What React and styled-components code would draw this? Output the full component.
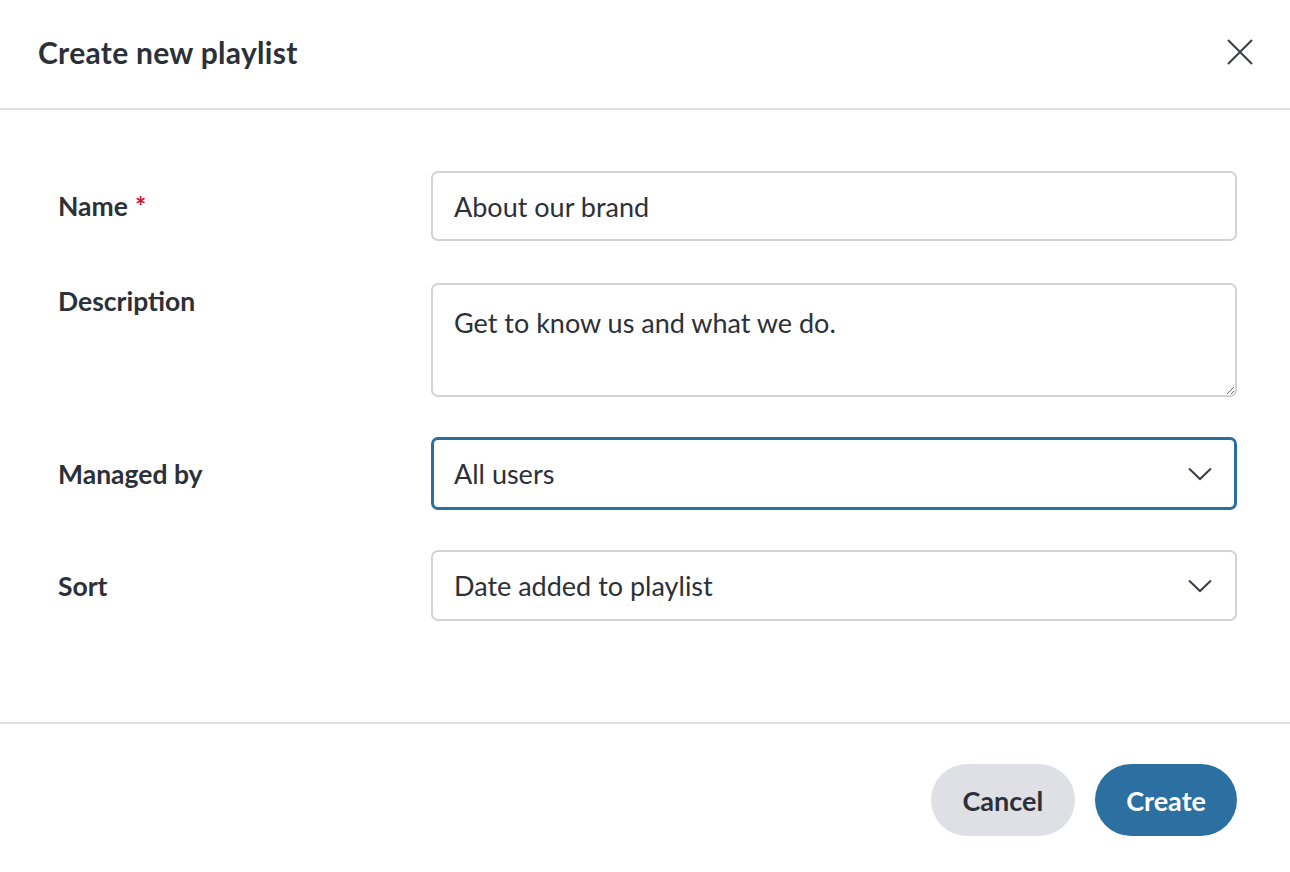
import React from "react";
import styled, { createGlobalStyle } from "styled-components";

const Global = createGlobalStyle`
  html, body { margin: 0; padding: 0; background: #fff; }
  body { font-family: Lato, "Noto Sans", sans-serif; color: #2c3038; }
  * { box-sizing: border-box; }
`;

const Dialog = styled.div`
  width: 1290px;
  height: 872px;
  display: flex;
  flex-direction: column;
  background: #fff;
`;

const Header = styled.header`
  height: 110px;
  display: flex;
  align-items: center;
  justify-content: space-between;
  padding: 0 35px 4px 38px;
  border-bottom: 2px solid #dedee3;
`;

const Title = styled.h1`
  margin: 0;
  font-size: 30px;
  font-weight: 700;
  color: #2c3038;
  letter-spacing: 0.3px;
`;

const CloseButton = styled.button`
  width: 30px;
  height: 30px;
  border: none;
  background: none;
  padding: 0;
  display: flex;
  align-items: center;
  justify-content: center;
  cursor: pointer;
  color: #3a3d44;
`;

const Body = styled.div`
  height: 614px;
  display: flex;
  flex-direction: column;
  gap: 40px;
  padding: 61px 53px 0 58px;
  border-bottom: 2px solid #dedee3;
`;

const Row = styled.div`
  display: grid;
  grid-template-columns: 373px 1fr;
  align-items: ${(p) => (p.$top ? "start" : "center")};
  margin-bottom: ${(p) => p.$extra || 0}px;
`;

const Label = styled.label`
  font-size: 26.5px;
  font-weight: 700;
  color: #2c3038;
  padding-top: ${(p) => (p.$top ? "2px" : "0")};
`;

const Required = styled.span`
  color: #d0103a;
  margin-left: 7px;
`;

const fieldBase = `
  width: 100%;
  font-family: Lato, "Noto Sans", sans-serif;
  font-size: 27px;
  color: #2c3038;
  background: #fff;
  border-radius: 7px;
  outline: none;
`;

const TextInput = styled.input`
  ${fieldBase}
  height: 70px;
  border: 2px solid #d2d2d7;
  padding: 0 21px;
`;

const TextArea = styled.textarea`
  ${fieldBase}
  height: 114px;
  border: 2px solid #d2d2d7;
  padding: 20px 21px;
  resize: vertical;
  display: block;
  line-height: 1.3;
`;

const Select = styled.div`
  ${fieldBase}
  height: ${(p) => (p.$focused ? "73px" : "71px")};
  border: ${(p) => (p.$focused ? "3px solid #2a6f9e" : "2px solid #d2d2d7")};
  padding: ${(p) => (p.$focused ? "0 22px 0 20px" : "0 23px 0 21px")};
  display: flex;
  align-items: center;
  justify-content: space-between;
  cursor: pointer;
`;

const Footer = styled.footer`
  flex: 1;
  display: flex;
  align-items: flex-start;
  justify-content: flex-end;
  gap: 20px;
  padding: 40px 53px 0 0;
`;

const Button = styled.button`
  height: 72px;
  padding: 0 ${(p) => (p.$primary ? "31px" : "32px")};
  border: none;
  border-radius: 36px;
  font-family: Lato, "Noto Sans", sans-serif;
  font-size: 27px;
  font-weight: 700;
  background: ${(p) => (p.$primary ? "#2b70a0" : "#dfe0e5")};
  color: ${(p) => (p.$primary ? "#ffffff" : "#2c3038")};
  cursor: pointer;
`;

const Chevron = () => (
  <svg width="24" height="14" viewBox="0 0 24 14" fill="none">
    <path d="M1 1.5 L12 12 L23 1.5" stroke="#3a3d44" strokeWidth="2" />
  </svg>
);

export default function App() {
  return (
    <>
      <Global />
      <Dialog>
        <Header>
          <Title>Create new playlist</Title>
          <CloseButton aria-label="Close">
            <svg width="26" height="26" viewBox="0 0 26 26" fill="none">
              <path d="M1 1 L25 25 M25 1 L1 25" stroke="#3a3d44" strokeWidth="2" />
            </svg>
          </CloseButton>
        </Header>
        <Body>
          <Row $extra={2}>
            <Label>
              Name<Required>*</Required>
            </Label>
            <TextInput defaultValue="About our brand" />
          </Row>
          <Row $top>
            <Label $top>Description</Label>
            <TextArea defaultValue="Get to know us and what we do." />
          </Row>
          <Row>
            <Label>Managed by</Label>
            <Select $focused>
              <span>All users</span>
              <Chevron />
            </Select>
          </Row>
          <Row>
            <Label>Sort</Label>
            <Select>
              <span>Date added to playlist</span>
              <Chevron />
            </Select>
          </Row>
        </Body>
        <Footer>
          <Button>Cancel</Button>
          <Button $primary>Create</Button>
        </Footer>
      </Dialog>
    </>
  );
}
